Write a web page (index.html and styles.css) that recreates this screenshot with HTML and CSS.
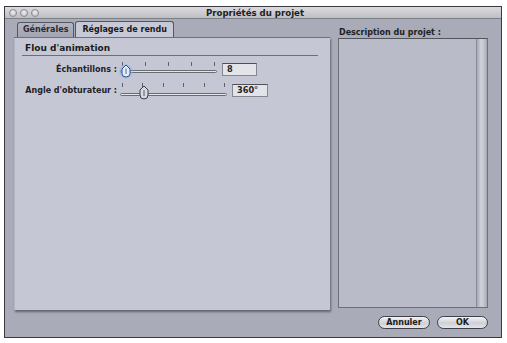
FILE: index.html
```html
<!DOCTYPE html>
<html lang="fr">
<head>
    <meta charset="UTF-8">
    <title>Propriétés du projet</title>
    <link rel="stylesheet" href="styles.css">
</head>
<body>
    <div class="window">
        <div class="titlebar">
            <div class="lights"><span></span><span></span><span></span></div>
            <div class="title">Propriétés du projet</div>
        </div>
        <div class="content">
            <div class="main">
                <div class="left">
                    <div class="tabs">
                        <div class="tab">Générales</div>
                        <div class="tab active">Réglages de rendu</div>
                    </div>
                    <div class="panel">
                        <div class="section">Flou d'animation</div>
                        <div class="row row1">
                            <div class="label">Échantillons :</div>
                            <div class="slider s1">
                                <div class="ticks"><i></i><i></i><i></i><i></i><i></i></div>
                                <div class="track"></div>
                                <svg class="knob focus" width="14" height="16" viewBox="0 0 14 16">
                                    <ellipse cx="7" cy="8.5" rx="6.8" ry="7.2" fill="#8fb4ee" opacity=".55"/>
                                    <path d="M7 2 L11 6 V10.5 Q11 14 7 14 Q3 14 3 10.5 V6 Z" fill="#e6ecf8" stroke="#2f4f8a" stroke-width="1"/>
                                    <line x1="7" y1="5.5" x2="7" y2="11" stroke="#4a6aa5" stroke-width="1"/>
                                </svg>
                            </div>
                            <div class="field">8</div>
                        </div>
                        <div class="row row2">
                            <div class="label">Angle d'obturateur :</div>
                            <div class="slider s2">
                                <div class="ticks"><i></i><i></i><i></i><i></i><i></i><i></i></div>
                                <div class="track"></div>
                                <svg class="knob" width="12" height="15" viewBox="0 0 12 15">
                                    <path d="M6 1 L10 5 V10 Q10 14 6 14 Q2 14 2 10 V5 Z" fill="#d9dbe2" stroke="#3c3e46" stroke-width="1"/>
                                    <line x1="6" y1="5" x2="6" y2="11" stroke="#55575f" stroke-width="1"/>
                                </svg>
                            </div>
                            <div class="field">360°</div>
                        </div>
                    </div>
                </div>
                <div class="right">
                    <div class="desc-label">Description du projet :</div>
                    <div class="desc">
                        <div class="scroll"></div>
                    </div>
                </div>
            </div>
            <div class="footer">
                <div class="btn">Annuler</div>
                <div class="btn ok">OK</div>
            </div>
        </div>
    </div>
</body>
</html>
```

FILE: styles.css
```css
* {
    margin: 0;
    padding: 0;
    box-sizing: border-box;
}

body {
    background: #fff;
    font-family: "DejaVu Sans", sans-serif;
    font-weight: bold;
    font-size: 8px;
    color: #1e1f24;
}

.window {
    margin: 6px 0 0 4px;
    width: 498px;
    height: 332px;
    border: 1px solid #3a3b40;
    background: #a9acb8;
    display: flex;
    flex-direction: column;
}

.titlebar {
    height: 12px;
    background: linear-gradient(#dcdcdf, #bdbec3);
    border-bottom: 1px solid #7e8088;
    display: flex;
    align-items: center;
}

.lights {
    display: flex;
    gap: 3px;
    padding-left: 4px;
}

.lights span {
    width: 8px;
    height: 8px;
    border-radius: 50%;
    border: 1px solid #8a8c94;
    background: radial-gradient(circle at 50% 35%, #f0f0f2, #b9bac0);
}

.title {
    flex: 1;
    text-align: center;
    font-size: 8.6px;
    padding-right: 30px;
    color: #202126;
}

.content {
    flex: 1;
    display: flex;
    flex-direction: column;
}

.main {
    display: flex;
    padding: 2px 0 0 9px;
}

.left {
    width: 316px;
}

.tabs {
    display: flex;
    padding-left: 3px;
    gap: 1px;
    height: 16px;
    align-items: flex-end;
}

.tab {
    height: 15px;
    padding: 0 5px;
    line-height: 14px;
    border: 1px solid #55575f;
    border-bottom: none;
    border-radius: 3px 3px 0 0;
    background: linear-gradient(#b3b6c2, #a2a5b1);
    color: #2a2b31;
}

.tab.active {
    height: 16px;
    line-height: 15px;
    padding: 0 6px;
    background: #c7cad6;
    color: #17181c;
}

.panel {
    height: 273px;
    background: #c5c8d4;
    border-top: 1px solid #6f717a;
    box-shadow: 1px 2px 2px rgba(40, 42, 52, .55), inset 1px 0 0 #b3b6c2;
    padding: 5px 0 0 8px;
}

.section {
    font-size: 9px;
    width: 296px;
    padding: 0 0 2px 3px;
    border-bottom: 1px solid #6d6f78;
    color: #1a1b20;
}

.row {
    display: flex;
    align-items: center;
}

.row1 {
    margin-top: 5px;
    height: 17px;
}

.row2 {
    margin-top: 4px;
    height: 17px;
}

.label {
    width: 95px;
    text-align: right;
    color: #222328;
}

.slider {
    position: relative;
    margin-left: 3px;
    height: 16px;
}

.s1 {
    width: 97px;
}

.s2 {
    width: 107px;
}

.ticks {
    display: flex;
    justify-content: space-between;
    padding: 0 2px;
    height: 5px;
}

.ticks i {
    width: 1px;
    height: 4px;
    background: #60626b;
}

.track {
    margin-top: 3px;
    height: 3px;
    border: 1px solid #6a6c74;
    border-radius: 2px;
    background: #e4e5ea;
}

.s2 .track {
    margin-top: 5px;
}

.knob {
    position: absolute;
}

.s1 .knob {
    left: -1px;
    top: 1px;
}

.s2 .knob {
    left: 18px;
    top: 2px;
}

.field {
    margin-left: 5px;
    width: 35px;
    height: 13px;
    line-height: 11px;
    padding-left: 4px;
    background: #e3e4ea;
    border: 1px solid #85878f;
    border-top-color: #4e5058;
    font-size: 8.2px;
}

.row2 .field {
    width: 36px;
}

.right {
    margin-left: 8px;
    width: 150px;
}

.desc-label {
    height: 17px;
    padding: 7px 0 0 1px;
    line-height: 10px;
    color: #1e1f24;
}

.desc {
    height: 270px;
    background: #b9bcc8;
    border: 1px solid #6e7079;
    border-top-color: #52545c;
    display: flex;
    justify-content: flex-end;
}

.scroll {
    width: 11px;
    background: linear-gradient(90deg, #a5a8b3, #d1d3db 40%, #c2c4cd 70%, #a4a7b2);
    border-left: 1px solid #8c8e97;
}

.footer {
    display: flex;
    justify-content: flex-end;
    gap: 7px;
    padding: 6px 13px 0 0;
}

.btn {
    width: 52px;
    height: 13px;
    line-height: 11px;
    text-align: center;
    border: 1px solid #3f4148;
    border-radius: 7px;
    background: linear-gradient(#f4f4f6, #cfd0d6 55%, #e4e5ea);
    color: #1b1c20;
}

.btn.ok {
    width: 51px;
}
```
